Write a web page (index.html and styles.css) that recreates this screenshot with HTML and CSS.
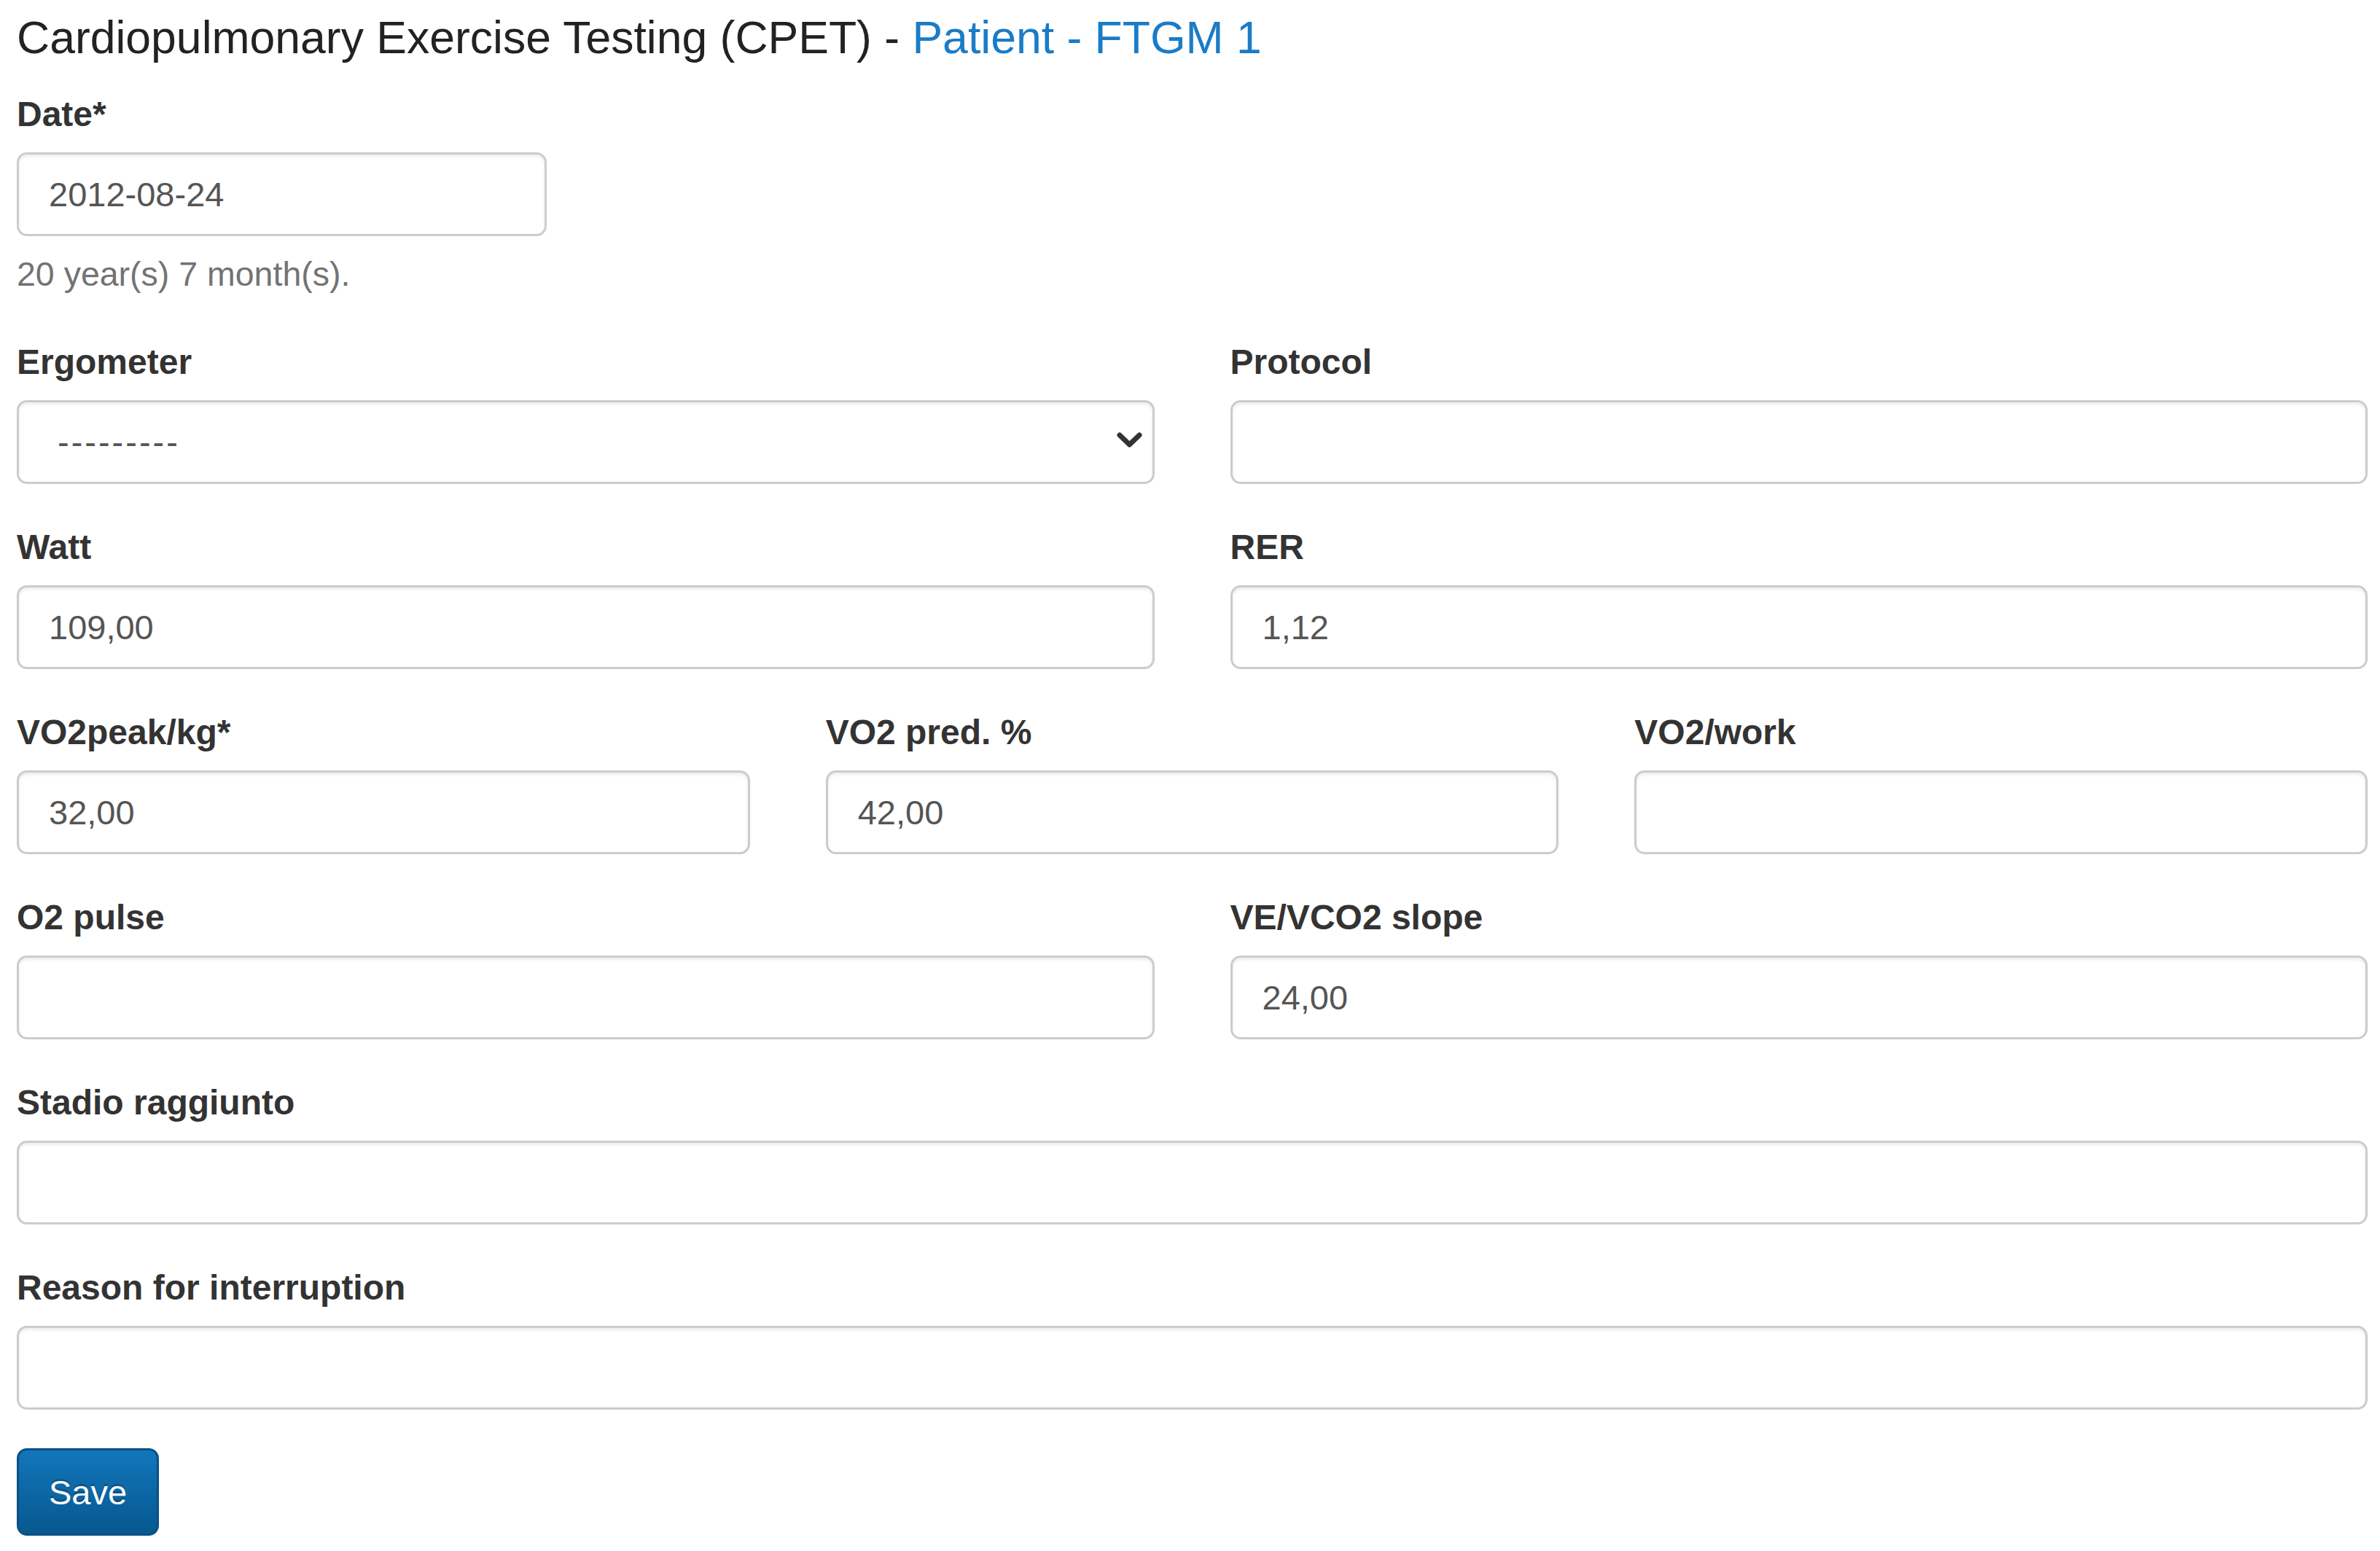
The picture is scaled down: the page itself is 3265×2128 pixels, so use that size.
FILE: index.html
```html
<!DOCTYPE html>
<html lang="en">
<head>
  <meta charset="UTF-8">
  <meta name="viewport" content="width=device-width, initial-scale=1">
  <title>CPET</title>
  <link rel="stylesheet" href="styles.css">
</head>

<body>

  <h4 class="page-title">Cardiopulmonary Exercise Testing (CPET) - <a href="#">Patient - FTGM 1</a></h4>

  <form class="cpet-form">

    <div class="form-group date-group">
      <label for="date">Date*</label>
      <input class="form-control date-input" id="date" type="text" value="2012-08-24">
      <p class="help-block">20 year(s) 7 month(s).</p>
    </div>

    <div class="row">
      <div class="form-group">
        <label for="ergometer">Ergometer</label>
        <div class="select-wrap">
          <select class="form-control" id="ergometer">
            <option>---------</option>
          </select>
          <svg class="caret" viewBox="0 0 35 23" width="35" height="23">
            <path d="M4 4 L17.5 17 L31 4" fill="none" stroke="#333" stroke-width="7" stroke-linecap="round" stroke-linejoin="round"/>
          </svg>
        </div>
      </div>
      <div class="form-group">
        <label for="protocol">Protocol</label>
        <input class="form-control" id="protocol" type="text">
      </div>
    </div>

    <div class="row">
      <div class="form-group">
        <label for="watt">Watt</label>
        <input class="form-control" id="watt" type="text" value="109,00">
      </div>
      <div class="form-group">
        <label for="rer">RER</label>
        <input class="form-control" id="rer" type="text" value="1,12">
      </div>
    </div>

    <div class="row row-3">
      <div class="form-group">
        <label for="vo2peak">VO2peak/kg*</label>
        <input class="form-control" id="vo2peak" type="text" value="32,00">
      </div>
      <div class="form-group">
        <label for="vo2pred">VO2 pred. %</label>
        <input class="form-control" id="vo2pred" type="text" value="42,00">
      </div>
      <div class="form-group">
        <label for="vo2work">VO2/work</label>
        <input class="form-control" id="vo2work" type="text">
      </div>
    </div>

    <div class="row">
      <div class="form-group">
        <label for="o2pulse">O2 pulse</label>
        <input class="form-control" id="o2pulse" type="text">
      </div>
      <div class="form-group">
        <label for="slope">VE/VCO2 slope</label>
        <input class="form-control" id="slope" type="text" value="24,00">
      </div>
    </div>

    <div class="form-group">
      <label for="stadio">Stadio raggiunto</label>
      <input class="form-control" id="stadio" type="text">
    </div>

    <div class="form-group">
      <label for="reason">Reason for interruption</label>
      <input class="form-control" id="reason" type="text">
    </div>

    <button class="btn-primary" type="submit">Save</button>

  </form>

</body>
</html>
```

FILE: styles.css
```css
:root {
  --text-color: #333333;
  --input-color: #555555;
  --muted: #737373;
  --link: #1a7cc7;
  --border: #cccccc;
}

* { margin: 0; padding: 0; box-sizing: border-box; }

body {
  font-family: 'Liberation Sans', Arial, sans-serif;
  color: var(--text-color);
  background: #ffffff;
  padding: 18px 17px 0 23px;
}

.page-title {
  font-size: 62.5px;
  line-height: 67px;
  font-weight: normal;
  color: #222222;
  margin-bottom: 38px;
}

.page-title a {
  color: var(--link);
  text-decoration: none;
}

.form-group {
  margin-bottom: 53px;
}

label {
  display: block;
  font-size: 48px;
  line-height: 68px;
  font-weight: bold;
  margin-bottom: 18px;
}

.form-control {
  display: block;
  width: 100%;
  height: 115px;
  padding: 0 41px;
  font-family: inherit;
  font-size: 47px;
  color: var(--input-color);
  background: #ffffff;
  border: 3px solid var(--border);
  border-radius: 14px;
  box-shadow: inset 0 3px 4px rgba(0, 0, 0, 0.075);
  outline: none;
}

.date-input {
  width: 727px;
}

.help-block {
  margin-top: 18px;
  font-size: 46.5px;
  line-height: 68px;
  color: var(--muted);
}

.row {
  display: grid;
  grid-template-columns: repeat(2, 1fr);
  column-gap: 104px;
}

.row-3 {
  grid-template-columns: repeat(3, 1fr);
}

.select-wrap {
  position: relative;
}

.select-wrap select {
  appearance: none;
  -webkit-appearance: none;
  padding-left: 53px;
  letter-spacing: 3px;
}

.caret {
  position: absolute;
  right: 17px;
  top: 44px;
  pointer-events: none;
}

.btn-primary {
  display: inline-block;
  height: 120px;
  padding: 0 41px;
  font-family: inherit;
  font-size: 47px;
  color: #ffffff;
  background: linear-gradient(to bottom, #1276bb 0%, #07588f 100%);
  border: 3px solid #0a5185;
  border-radius: 14px;
  text-shadow: 0 -3px 0 rgba(0, 0, 0, 0.2);
  cursor: pointer;
}
```
